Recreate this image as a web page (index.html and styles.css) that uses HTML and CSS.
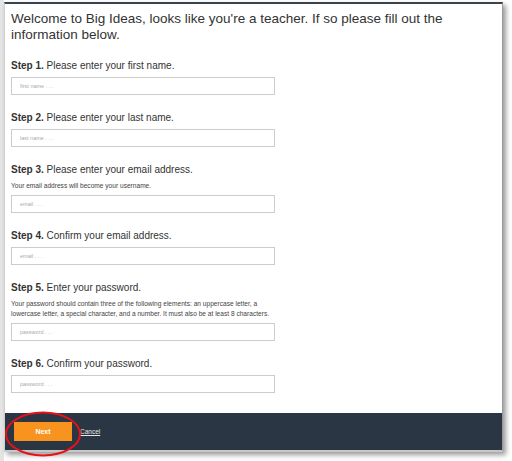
FILE: index.html
```html
<!DOCTYPE html>
<html>
<head>
<meta charset="utf-8">
<link rel="stylesheet" href="styles.css">
</head>
<body>
<div class="modal">
  <div class="content">
    <h1 class="title">Welcome to Big Ideas, looks like you're a teacher. If so please fill out the information below.</h1>

    <div class="step">
      <div class="label"><b>Step 1.</b> Please enter your first name.</div>
      <input class="field" type="text" placeholder="first name . . .">
    </div>
    <div class="step">
      <div class="label"><b>Step 2.</b> Please enter your last name.</div>
      <input class="field" type="text" placeholder="last name . . .">
    </div>
    <div class="step">
      <div class="label"><b>Step 3.</b> Please enter your email address.</div>
      <div class="note">Your email address will become your username.</div>
      <input class="field" type="text" placeholder="email . . .">
    </div>
    <div class="step">
      <div class="label"><b>Step 4.</b> Confirm your email address.</div>
      <input class="field" type="text" placeholder="email . . .">
    </div>
    <div class="step">
      <div class="label"><b>Step 5.</b> Enter your password.</div>
      <div class="note">Your password should contain three of the following elements: an uppercase letter, a<br>lowercase letter, a special character, and a number. It must also be at least 8 characters.</div>
      <input class="field" type="password" placeholder="password . . .">
    </div>
    <div class="step">
      <div class="label"><b>Step 6.</b> Confirm your password.</div>
      <input class="field" type="password" placeholder="password . . .">
    </div>
  </div>
  <div class="footer">
    <button class="next">Next</button>
    <a class="cancel" href="#">Cancel</a>
  </div>
</div>
<svg class="circle" width="80" height="50" viewBox="0 0 80 50">
  <ellipse cx="39" cy="24" rx="37" ry="21.5" fill="none" stroke="#e3121b" stroke-width="2"/>
</svg>
</body>
</html>
```
FILE: styles.css
```css
html, body {
  margin: 0;
  padding: 0;
}
body {
  width: 512px;
  height: 461px;
  overflow: hidden;
  position: relative;
  background: linear-gradient(to right, #e4e4e4 4px, #ffffff 4px);
  font-family: "Liberation Sans", Arial, sans-serif;
  color: #333;
}
.modal {
  margin: 2px 0 0 4px;
  width: 497px;
  background: #fff;
  border-top: 2px solid #3a444e;
  border-left: 1px solid #cfcfcf;
  border-right: 1px solid #9a9a9a;
  border-bottom: 2px solid #c8c8c8;
  box-shadow: 3px 3px 5px rgba(0, 0, 0, 0.4);
}
.content {
  padding: 7px 6px 20px 6px;
}
.title {
  margin: 0 0 17px 0;
  font-size: 13.5px;
  line-height: 16px;
  font-weight: normal;
  color: #333;
}
.step + .step {
  margin-top: 17px;
}
.label {
  font-size: 10px;
  line-height: 12px;
  margin-bottom: 5px;
  color: #333;
}
.label b {
  font-weight: bold;
}
.note {
  font-size: 6.6px;
  line-height: 10px;
  margin: 1px 0 4px 0;
  color: #444;
}
.field {
  display: block;
  box-sizing: border-box;
  width: 264px;
  height: 18px;
  margin: 0;
  padding: 0 0 0 8px;
  border: 1px solid #cccccc;
  border-radius: 0;
  background: #fff;
  font-family: "Liberation Sans", Arial, sans-serif;
  font-size: 5.5px;
  color: #555;
  outline: none;
}
.field::placeholder {
  color: #aaaaaa;
}
.footer {
  height: 37px;
  background: #2a3643;
  display: flex;
  align-items: center;
  gap: 8px;
  padding: 0 9px;
}
.next {
  width: 58px;
  height: 19px;
  margin: 0;
  padding: 0;
  border: none;
  border-radius: 0;
  background: #f7931e;
  color: #fff;
  font-family: "Liberation Sans", Arial, sans-serif;
  font-size: 7px;
  font-weight: bold;
}
.cancel {
  font-size: 6.5px;
  color: #e6e6e6;
  text-decoration: underline;
}
.circle {
  position: absolute;
  left: 4px;
  top: 410px;
}
```
